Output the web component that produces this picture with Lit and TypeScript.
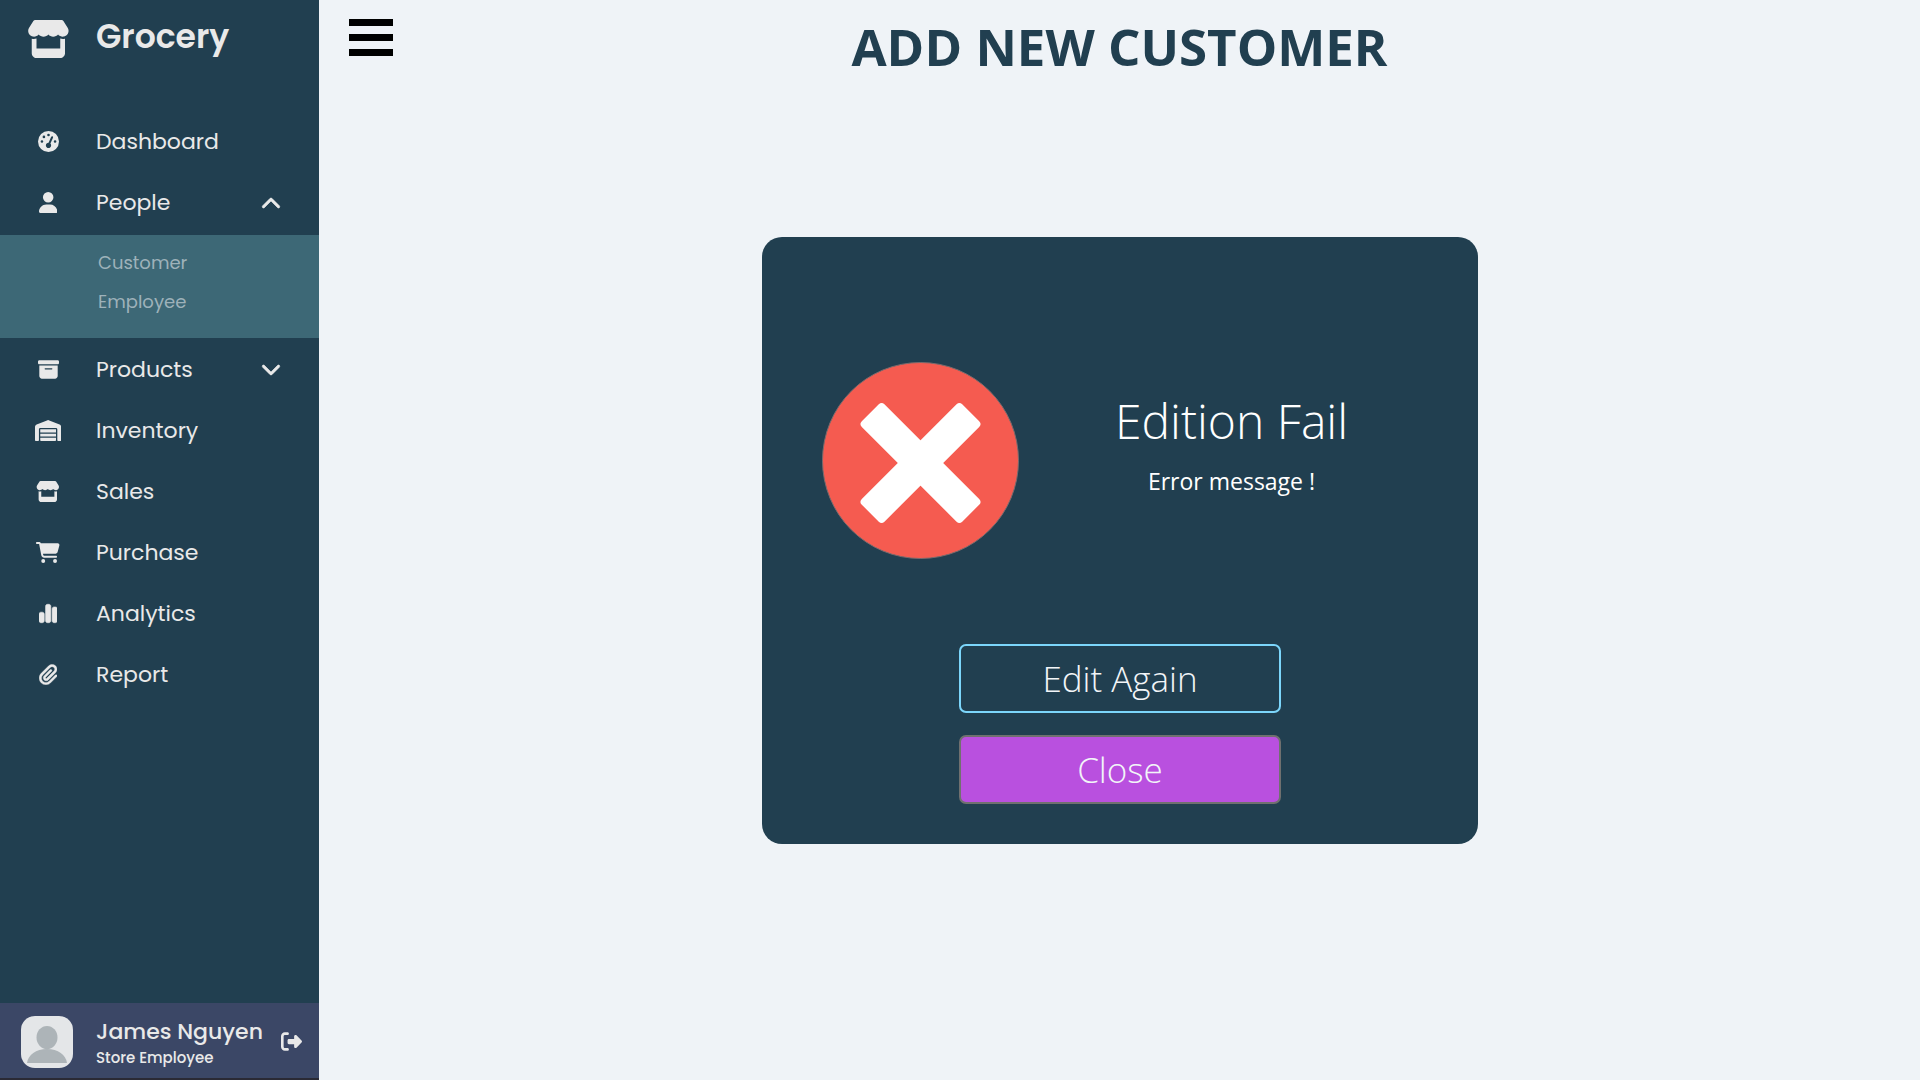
import { LitElement, html, svg, css, nothing } from "lit";
import { customElement, property, state } from "lit/decorators.js";

interface Glyph {
  width: number;
  path: string;
  stroke?: number;
}

/* Every glyph is drawn on a 512-unit-high grid; only the width differs. */
const GLYPHS: Record<string, Glyph> = {
  store: {
    width: 576,
    path: "M547.6 103.8L490.3 13.1C485.2 5 476.1 0 466.4 0H109.6C99.9 0 90.8 5 85.7 13.1L28.3 103.8c-29.6 46.8-3.4 111.9 51.9 119.4c4 .5 8.1 .8 12.1 .8c26.1 0 49.3-11.4 65.2-29c15.9 17.6 39.1 29 65.2 29c26.1 0 49.3-11.4 65.2-29c15.9 17.6 39.1 29 65.2 29c26.2 0 49.3-11.4 65.2-29c16 17.6 39.1 29 65.2 29c4.1 0 8.1-.3 12.1-.8c55.5-7.4 81.8-72.5 52.1-119.4zM499.7 254.9l-.1 0c-5.3 .7-10.7 1.1-16.2 1.1c-12.4 0-24.3-1.9-35.4-5.3V384H128V250.6c-11.2 3.5-23.2 5.4-35.6 5.4c-5.5 0-11-.4-16.3-1.1l-.1 0c-4.1-.6-8.1-1.3-12-2.3V384v64c0 35.3 28.7 64 64 64H448c35.3 0 64-28.7 64-64V384 252.6c-4 1-8 1.8-12.3 2.3z",
  },
  gauge: {
    width: 512,
    path: "M0 256a256 256 0 1 1 512 0A256 256 0 1 1 0 256zM288 96a32 32 0 1 0 -64 0 32 32 0 1 0 64 0zM256 416c35.3 0 64-28.7 64-64c0-17.4-6.9-33.1-18.1-44.6L366 161.7c5.3-12.1-.2-26.3-12.3-31.6s-26.3 .2-31.6 12.3L257.9 288c-.6 0-1.3 0-1.9 0c-35.3 0-64 28.7-64 64s28.7 64 64 64zM176 144a32 32 0 1 0 -64 0 32 32 0 1 0 64 0zM96 288a32 32 0 1 0 0-64 32 32 0 1 0 0 64zm352-32a32 32 0 1 0 -64 0 32 32 0 1 0 64 0z",
  },
  user: {
    width: 448,
    path: "M224 256A128 128 0 1 0 224 0a128 128 0 1 0 0 256zm-45.7 48C79.8 304 0 383.8 0 482.3C0 498.7 13.3 512 29.7 512H418.3c16.4 0 29.7-13.3 29.7-29.7C448 383.8 368.2 304 269.7 304H178.3z",
  },
  archive: {
    width: 512,
    path: "M32 32H480c17.7 0 32 14.3 32 32V96c0 17.7-14.3 32-32 32H32C14.3 128 0 113.7 0 96V64C0 46.3 14.3 32 32 32zm0 128H480V416c0 35.3-28.7 64-64 64H96c-35.3 0-64-28.7-64-64V160zm128 80c0 8.8 7.2 16 16 16H336c8.8 0 16-7.2 16-16s-7.2-16-16-16H176c-8.8 0-16 7.2-16 16z",
  },
  warehouse: {
    width: 640,
    path: "M0 488V171.3c0-26.2 15.9-49.7 40.2-59.4L308.1 4.8c7.6-3.1 16.1-3.1 23.8 0L599.8 111.9c24.3 9.7 40.2 33.3 40.2 59.4V488c0 13.3-10.7 24-24 24H568c-13.3 0-24-10.7-24-24V224c0-17.7-14.3-32-32-32H128c-17.7 0-32 14.3-32 32V488c0 13.3-10.7 24-24 24H24c-13.3 0-24-10.7-24-24zm488 24l-336 0c-13.3 0-24-10.7-24-24V432H512l0 56c0 13.3-10.7 24-24 24zM128 400V336H512v64H128zm0-96V224H512l0 80H128z",
  },
  cart: {
    width: 576,
    path: "M0 24C0 10.7 10.7 0 24 0H69.5c22 0 41.5 12.8 50.6 32h411c26.3 0 45.5 25 38.6 50.4l-41 152.3c-8.5 31.4-37 53.3-69.5 53.3H170.7l5.4 28.5c2.2 11.3 12.1 19.5 23.6 19.5H488c13.3 0 24 10.7 24 24s-10.7 24-24 24H199.7c-34.6 0-64.3-24.6-70.7-58.5L77.4 54.5c-.7-3.8-4-6.5-7.9-6.5H24C10.7 48 0 37.3 0 24zM128 464a48 48 0 1 1 96 0 48 48 0 1 1 -96 0zm336-48a48 48 0 1 1 0 96 48 48 0 1 1 0-96z",
  },
  chart: {
    width: 448,
    path: "M160 80c0-26.5 21.5-48 48-48h32c26.5 0 48 21.5 48 48V432c0 26.5-21.5 48-48 48H208c-26.5 0-48-21.5-48-48V80zM0 272c0-26.5 21.5-48 48-48H80c26.5 0 48 21.5 48 48V432c0 26.5-21.5 48-48 48H48c-26.5 0-48-21.5-48-48V272zM368 96h32c26.5 0 48 21.5 48 48V432c0 26.5-21.5 48-48 48H368c-26.5 0-48-21.5-48-48V144c0-26.5 21.5-48 48-48z",
    stroke: 14,
  },
  paperclip: {
    width: 448,
    path: "M364.2 83.8c-24.4-24.4-64-24.4-88.4 0l-184 184c-42.1 42.1-42.1 110.3 0 152.4s110.3 42.1 152.4 0l152-152c10.9-10.9 28.7-10.9 39.6 0s10.9 28.7 0 39.6l-152 152c-64 64-167.6 64-231.6 0s-64-167.6 0-231.6l184-184c46.3-46.3 121.3-46.3 167.6 0s46.3 121.3 0 167.6l-176 176c-28.6 28.6-75 28.6-103.6 0s-28.6-75 0-103.6l144-144c10.9-10.9 28.7-10.9 39.6 0s10.9 28.7 0 39.6l-144 144c-6.7 6.7-6.7 17.7 0 24.4s17.7 6.7 24.4 0l176-176c24.4-24.4 24.4-64 0-88.4z",
    stroke: 8,
  },
  chevronUp: {
    width: 512,
    path: "M233.4 137.4c12.5-12.5 32.8-12.5 45.3 0l192 192c12.5 12.5 12.5 32.8 0 45.3s-32.8 12.5-45.3 0L256 205.3 86.6 374.6c-12.5 12.5-32.8 12.5-45.3 0s-12.5-32.8 0-45.3l192-192z",
    stroke: 16,
  },
  chevronDown: {
    width: 512,
    path: "M233.4 374.6c12.5 12.5 32.8 12.5 45.3 0l192-192c12.5-12.5 12.5-32.8 0-45.3s-32.8-12.5-45.3 0L256 306.7 86.6 137.4c-12.5-12.5-32.8-12.5-45.3 0s-12.5 32.8 0 45.3l192 192z",
    stroke: 16,
  },
  logout: {
    width: 512,
    path: "M377.9 105.9L500.7 228.7c7.2 7.2 11.3 17.1 11.3 27.3s-4.1 20.1-11.3 27.3L377.9 406.1c-6.4 6.4-15 9.9-24 9.9c-18.7 0-33.9-15.2-33.9-33.9l0-62.1-128 0c-17.7 0-32-14.3-32-32l0-64c0-17.7 14.3-32 32-32l128 0 0-62.1c0-18.7 15.2-33.9 33.9-33.9c9 0 17.6 3.6 24 9.9zM160 96L96 96c-17.7 0-32 14.3-32 32l0 256c0 17.7 14.3 32 32 32l64 0c17.7 0 32 14.3 32 32s-14.3 32-32 32l-64 0c-53 0-96-43-96-96L0 128C0 75 43 32 96 32l64 0c17.7 0 32 14.3 32 32s-14.3 32-32 32z",
  },
};

const glyph = (name: string, cls: string) => {
  const g = GLYPHS[name];
  return html`<svg class=${cls} viewBox="0 0 ${g.width} 512" aria-hidden="true">
    ${svg`<path fill="currentColor" stroke="currentColor" stroke-width=${g.stroke ?? 0} d=${g.path}></path>`}
  </svg>`;
};

interface Entry {
  id: string;
  label: string;
  icon: string;
  children?: string[];
}

const ENTRIES: Entry[] = [
  { id: "dashboard", label: "Dashboard", icon: "gauge" },
  { id: "people", label: "People", icon: "user", children: ["Customer", "Employee"] },
  { id: "products", label: "Products", icon: "archive", children: [] },
  { id: "inventory", label: "Inventory", icon: "warehouse" },
  { id: "sales", label: "Sales", icon: "store" },
  { id: "purchase", label: "Purchase", icon: "cart" },
  { id: "analytics", label: "Analytics", icon: "chart" },
  { id: "report", label: "Report", icon: "paperclip" },
];

@customElement("side-nav")
export class SideNav extends LitElement {
  @state() private openId = "people";

  static styles = css`
    :host {
      display: flex;
      flex-direction: column;
      background: #213f50;
      color: #e9e9e9;
      font-family: Poppins, Inter, sans-serif;
    }
    .brand,
    .row,
    .profile {
      display: grid;
      grid-template-columns: 96px 1fr auto;
      align-items: center;
    }
    .brand {
      height: 78px;
      margin-bottom: 33px;
      font-size: 33px;
      font-weight: 600;
      line-height: 44px;
    }
    .brand-icon {
      height: 38px;
      justify-self: center;
    }
    .brand-name {
      padding-bottom: 4px;
    }
    .menu,
    .submenu {
      list-style: none;
      margin: 0;
      padding: 0;
    }
    .row {
      box-sizing: border-box;
      width: 100%;
      height: 61px;
      padding: 0 38px 0 0;
      border: 0;
      background: none;
      color: inherit;
      font: inherit;
      font-size: 22px;
      line-height: 32px;
      text-align: left;
      text-decoration: none;
      cursor: pointer;
    }
    .row-icon {
      height: 21px;
      justify-self: center;
    }
    .chevron {
      height: 20px;
    }
    .submenu {
      display: flex;
      flex-direction: column;
      gap: 9px;
      margin: 2px 0 1px;
      padding: 13px 0 21px 98px;
      background: #3d6876;
    }
    .sub-link {
      display: block;
      color: #9eb2ba;
      font-size: 18px;
      line-height: 30px;
      text-decoration: none;
    }
    .profile {
      height: 75px;
      margin-top: auto;
      border-bottom: 2px solid #2a2a35;
      padding-right: 17px;
      background: #3b4766;
    }
    .avatar {
      width: 52px;
      height: 52px;
      margin: 2px 3px 0 0;
      justify-self: center;
      border-radius: 14px;
    }
    .person {
      padding-top: 4px;
    }
    .name {
      font-size: 22px;
      font-weight: 500;
      line-height: 30px;
      white-space: nowrap;
    }
    .role {
      font-size: 15px;
      font-weight: 500;
      line-height: 22px;
    }
    .logout {
      display: flex;
      padding: 2px 0 0;
      border: 0;
      background: none;
      color: inherit;
      cursor: pointer;
    }
    .logout-icon {
      height: 21px;
    }
  `;

  private toggle(id: string) {
    this.openId = this.openId === id ? "" : id;
  }

  private renderEntry(e: Entry) {
    if (!e.children) {
      return html`<li>
        <a class="row" href="#${e.id}">${glyph(e.icon, "row-icon")}<span>${e.label}</span></a>
      </li>`;
    }
    const open = this.openId === e.id;
    return html`<li>
      <button class="row" type="button" aria-expanded=${open ? "true" : "false"} @click=${() => this.toggle(e.id)}>
        ${glyph(e.icon, "row-icon")}<span>${e.label}</span>${glyph(open ? "chevronUp" : "chevronDown", "chevron")}
      </button>
      ${open && e.children.length
        ? html`<ul class="submenu">
            ${e.children.map((c) => html`<li><a class="sub-link" href="#${c.toLowerCase()}">${c}</a></li>`)}
          </ul>`
        : nothing}
    </li>`;
  }

  render() {
    return html`
      <div class="brand">${glyph("store", "brand-icon")}<span class="brand-name">Grocery</span></div>
      <nav><ul class="menu">${ENTRIES.map((e) => this.renderEntry(e))}</ul></nav>
      <div class="profile">
        <svg class="avatar" viewBox="0 0 52 52" aria-hidden="true">
          <rect width="52" height="52" fill="#e4e6e8"></rect>
          <ellipse cx="26" cy="21.500" rx="10.500" ry="11.500" fill="#adb4b8"></ellipse>
          <path d="M6 47C7 39 15 33 26 33s19 6 20 14z" fill="#adb4b8"></path>
        </svg>
        <div class="person">
          <div class="name">James Nguyen</div>
          <div class="role">Store Employee</div>
        </div>
        <button class="logout" type="button" aria-label="Log out">${glyph("logout", "logout-icon")}</button>
      </div>
    `;
  }
}

@customElement("result-card")
export class ResultCard extends LitElement {
  @property() heading = "";
  @property() message = "";

  static styles = css`
    :host {
      display: flex;
      flex-direction: column;
      align-items: center;
      box-sizing: border-box;
      padding: 124px 34px 40px 60px;
      border-radius: 20px;
      background: #213f50;
      color: #fff;
      font-family: "Segoe UI", "Open Sans", sans-serif;
    }
    .summary {
      display: grid;
      grid-template-columns: auto 1fr;
      align-self: stretch;
      align-items: center;
      margin-bottom: 84px;
    }
    .mark {
      width: 198px;
      height: 199px;
    }
    .text {
      padding-bottom: 36px;
      text-align: center;
    }
    .heading {
      margin: 0;
      font-size: 48px;
      font-weight: 300;
      line-height: 68px;
    }
    .message {
      margin: 9px 0 0;
      font-size: 23px;
      font-weight: 400;
      line-height: 34px;
    }
    .actions {
      display: flex;
      flex-direction: column;
      gap: 22px;
      width: 322px;
      margin-right: 25px;
    }
    .action {
      height: 69px;
      padding: 0;
      border: 2px solid #7cd6fb;
      border-radius: 7px;
      background: transparent;
      color: #f2f5f8;
      font-family: inherit;
      font-size: 35px;
      font-weight: 300;
      line-height: 48px;
      cursor: pointer;
    }
    .action.close {
      border-color: #70706f;
      background: #b950df;
    }
  `;

  render() {
    return html`
      <div class="summary">
        <svg class="mark" viewBox="0 0 198 199" aria-hidden="true">
          <circle cx="98.500" cy="99.500" r="98" fill="#f55b50" stroke="#7b6b6d" stroke-width="1"></circle>
          <g transform="translate(98.500 102)" fill="#fff">
            <rect x="-71" y="-16" width="142" height="32" rx="4" transform="rotate(45)"></rect>
            <rect x="-71" y="-16" width="142" height="32" rx="4" transform="rotate(-45)"></rect>
          </g>
        </svg>
        <div class="text">
          <h2 class="heading">${this.heading}</h2>
          <p class="message">${this.message}</p>
        </div>
      </div>
      <div class="actions">
        <button class="action" type="button">Edit Again</button>
        <button class="action close" type="button">Close</button>
      </div>
    `;
  }
}

@customElement("app-root")
export class AppRoot extends LitElement {
  static styles = css`
    :host {
      display: grid;
      grid-template-columns: 319px 1fr;
      min-height: 100vh;
      background: #eff3f7;
    }
    .page {
      display: grid;
      grid-template-rows: auto 1fr;
    }
    .top {
      display: grid;
      grid-template-columns: 44px 1fr 44px;
      align-items: start;
      padding: 12px 30px 0;
    }
    .burger {
      display: flex;
      flex-direction: column;
      gap: 8px;
      padding: 7px 0;
      border: 0;
      background: none;
      cursor: pointer;
    }
    .bar {
      width: 44px;
      height: 7px;
      background: #000;
    }
    .title {
      margin: 0;
      color: #213f50;
      font-family: "Segoe UI", "Open Sans", sans-serif;
      font-size: 51px;
      font-weight: 700;
      line-height: 68px;
      text-align: center;
      text-transform: uppercase;
    }
    .stage {
      display: flex;
      justify-content: center;
      align-items: flex-start;
      padding: 157px 30px 30px;
    }
    .card {
      width: 100%;
      max-width: 716px;
    }
  `;

  render() {
    return html`
      <side-nav></side-nav>
      <main class="page">
        <header class="top">
          <button class="burger" type="button" aria-label="Toggle menu">
            <span class="bar"></span><span class="bar"></span><span class="bar"></span>
          </button>
          <h1 class="title">Add new customer</h1>
        </header>
        <section class="stage">
          <result-card class="card" heading="Edition Fail" message="Error message !"></result-card>
        </section>
      </main>
    `;
  }
}
